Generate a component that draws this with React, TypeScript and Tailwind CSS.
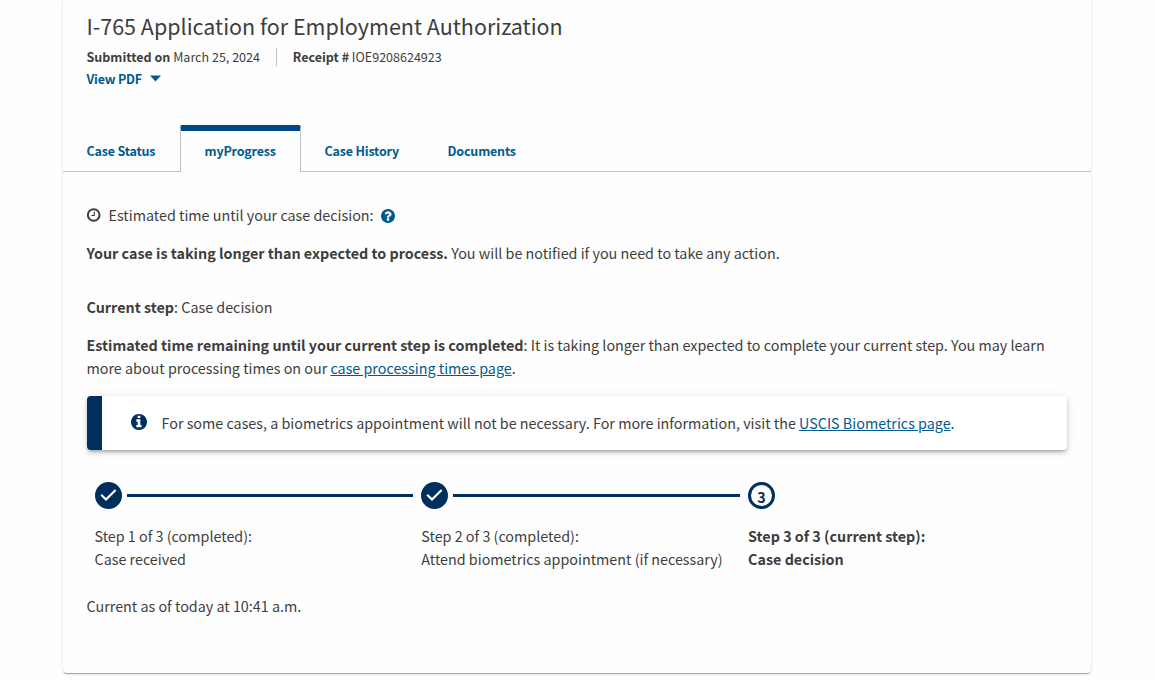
import type { ReactNode } from "react";

const tabs = [
  { label: "Case Status", width: "w-[117.5px] pl-6" },
  { label: "myProgress", width: "w-[121px] pl-[23.6px]", active: true },
  { label: "Case History", width: "w-[123px] pl-[23.6px]" },
  { label: "Documents", width: "w-[117px] pl-[23.6px]" },
];

function ClockIcon() {
  return (
    <svg width="14" height="14" viewBox="0 0 14 14" fill="none" stroke="currentColor" className="shrink-0">
      <circle cx="6.7" cy="7" r="5.8" strokeWidth="2" />
      <path d="M7.3 3.5v4H4.3" strokeWidth="1.1" />
    </svg>
  );
}

function QuestionIcon() {
  return (
    <svg width="14" height="14" viewBox="0 0 1536 1536" className="mt-[2px] shrink-0 text-[#005a8f]" fill="currentColor">
      <path d="M896 1248v-192q0-14-9-23t-23-9H672q-14 0-23 9t-9 23v192q0 14 9 23t23 9h192q14 0 23-9t9-23zm256-672q0-88-55.500-163T958 297t-170-41q-243 0-371 213-15 24 8 42l132 100q7 6 19 6 16 0 25-12 53-68 86-92 34-24 86-24 48 0 85.500 26t37.500 59q0 38-20 61t-68 45q-63 28-115.500 86.500T640 892v36q0 14 9 23t23 9h192q14 0 23-9t9-23q0-19 21.500-49.500T972 829q32-18 49-28.500t46-35 44.500-48 28-60.500 12.500-81zm384 192q0 209-103 385.500T1153.500 1433 768 1536t-385.500-103T103 1153.500 0 768t103-385.500T382.500 103 768 0t385.500 103T1433 382.500 1536 768z" />
    </svg>
  );
}

function InfoIcon() {
  return (
    <svg width="16" height="16" viewBox="0 0 1536 1536" className="mb-[2px] shrink-0 text-[#002e5d]" fill="currentColor">
      <path d="M1024 1248v-160q0-14-9-23t-23-9h-96V544q0-14-9-23t-23-9H544q-14 0-23 9t-9 23v160q0 14 9 23t23 9h96v320h-96q-14 0-23 9t-9 23v160q0 14 9 23t23 9h448q14 0 23-9t9-23zM896 352V192q0-14-9-23t-23-9H672q-14 0-23 9t-9 23v160q0 14 9 23t23 9h192q14 0 23-9t9-23zm640 416q0 209-103 385.500T1153.500 1433 768 1536t-385.500-103T103 1153.500 0 768t103-385.500T382.500 103 768 0t385.500 103T1433 382.500 1536 768z" />
    </svg>
  );
}

function CheckCircle() {
  return (
    <svg width="27" height="27" viewBox="0 0 27 27" className="shrink-0">
      <circle cx="13.5" cy="13.5" r="13.5" fill="#002e5d" />
      <path d="M6.200 12.800l4.800 4.700 9.600-9.500" fill="none" stroke="#fff" strokeWidth="2.200" />
    </svg>
  );
}

function Step({ title, name, marker, line, current }: { title: string; name: string; marker: ReactNode; line?: boolean; current?: boolean }) {
  return (
    <li className={current ? "w-[220px] shrink-0 font-bold" : "w-[326.800px] shrink-0"}>
      <div className="flex h-[27px] items-center">
        {marker}
        {line && <span className="mr-2 ml-[5px] h-[3px] grow bg-[#002e5d]" />}
      </div>
      <p className="mt-[15px] whitespace-nowrap leading-[23px]">
        {title}
        <br />
        {name}
      </p>
    </li>
  );
}

export default function App() {
  return (
    <div className="flex h-[680px] justify-center overflow-hidden bg-[#fefefe] pr-[2px] font-['Noto_Sans_CJK_SC',sans-serif] text-[14.330px] text-[#3d3d3d]">
      <main className="h-[673px] w-[1028px] rounded-b bg-[#fefefe] shadow-[0_2px_1px_-1px_rgba(0,0,0,0.2),0_1px_1px_rgba(0,0,0,0.14),0_1px_3px_rgba(0,0,0,0.12)]">
        <header className="h-[125px] px-6 pt-[10px]">
          <h1 className="whitespace-nowrap text-[21.490px] leading-8">I-765 Application for Employment Authorization</h1>
          <div className="mt-[6px] flex h-[18px] items-center whitespace-nowrap text-[12.540px] leading-[18px]">
            <p className="w-[189px]"><strong>Submitted on</strong> March 25, 2024</p>
            <span className="h-[18px] w-px bg-[#c0c0c0]" />
            <p className="ml-[16.300px]"><strong>Receipt #</strong> IOE9208624923</p>
          </div>
          <button className="mt-1 flex h-[18px] items-center whitespace-nowrap text-[12.530px] font-semibold tracking-[-0.2px] leading-[18px] text-[#005a8f]">
            <span className="w-[63px] text-left">View PDF</span>
            <svg width="11" height="7" viewBox="0 0 11 7" className="-mt-[2px]"><path d="M0 .5h11L5.500 6.500z" fill="currentColor" /></svg>
          </button>
        </header>
        <nav className="flex h-[47px] text-[12.530px] font-semibold tracking-[-0.2px] text-[#005a8f]">
          {tabs.map((t) => (
            <div key={t.label} className={`${t.width} ${t.active ? "rounded-t-[2px] border-x border-t-6 border-x-[#c0c0c0] border-t-[#00488c] pt-[9px]" : "border-b border-b-[#c0c0c0] pt-[15px]"} h-[47px] whitespace-nowrap leading-[21px]`}>
              {t.label}
            </div>
          ))}
          <div className="grow border-b border-[#c0c0c0]" />
        </nav>
        <section className="px-6 pt-[31px] leading-[23px]">
          <div className="flex h-[23px] items-center">
            <ClockIcon />
            <span className="ml-2 w-[272.500px] whitespace-nowrap">Estimated time until your case decision:</span>
            <QuestionIcon />
          </div>
          <p className="mt-[15px] whitespace-nowrap"><strong>Your case is taking longer than expected to process.</strong> You will be notified if you need to take any action.</p>
          <p className="mt-[31px] whitespace-nowrap"><strong>Current step</strong>: Case decision</p>
          <p className="mt-[15px] whitespace-nowrap">
            <strong>Estimated time remaining until your current step is completed</strong>: It is taking longer than expected to complete your current step. You may learn
            <br />
            more about processing times on our <a className="text-[#005a8f] underline">case processing times page</a>.
          </p>
          <aside className="mt-[17px] flex h-[54px] w-[980px] items-center rounded border-l-[15px] border-[#002e5d] bg-white pl-[29px] shadow-[0_3px_3px_-2px_rgba(0,0,0,0.2),0_3px_4px_rgba(0,0,0,0.14),0_1px_8px_rgba(0,0,0,0.12)]">
            <InfoIcon />
            <p className="-mt-px ml-[15px] whitespace-nowrap">For some cases, a biometrics appointment will not be necessary. For more information, visit the <a className="text-[#005a8f] underline">USCIS Biometrics page</a>.</p>
          </aside>
          <ol className="mt-8 flex pl-2">
            <Step title="Step 1 of 3 (completed):" name="Case received" marker={<CheckCircle />} line />
            <Step title="Step 2 of 3 (completed):" name="Attend biometrics appointment (if necessary)" marker={<CheckCircle />} line />
            <Step title="Step 3 of 3 (current step):" name="Case decision" current marker={<span className="flex size-[27px] items-center justify-center rounded-full border-3 border-[#002e5d] pt-px text-[#002e5d]">3</span>} />
          </ol>
          <p className="mt-6 whitespace-nowrap">Current as of today at 10:41 a.m.</p>
        </section>
      </main>
    </div>
  );
}
